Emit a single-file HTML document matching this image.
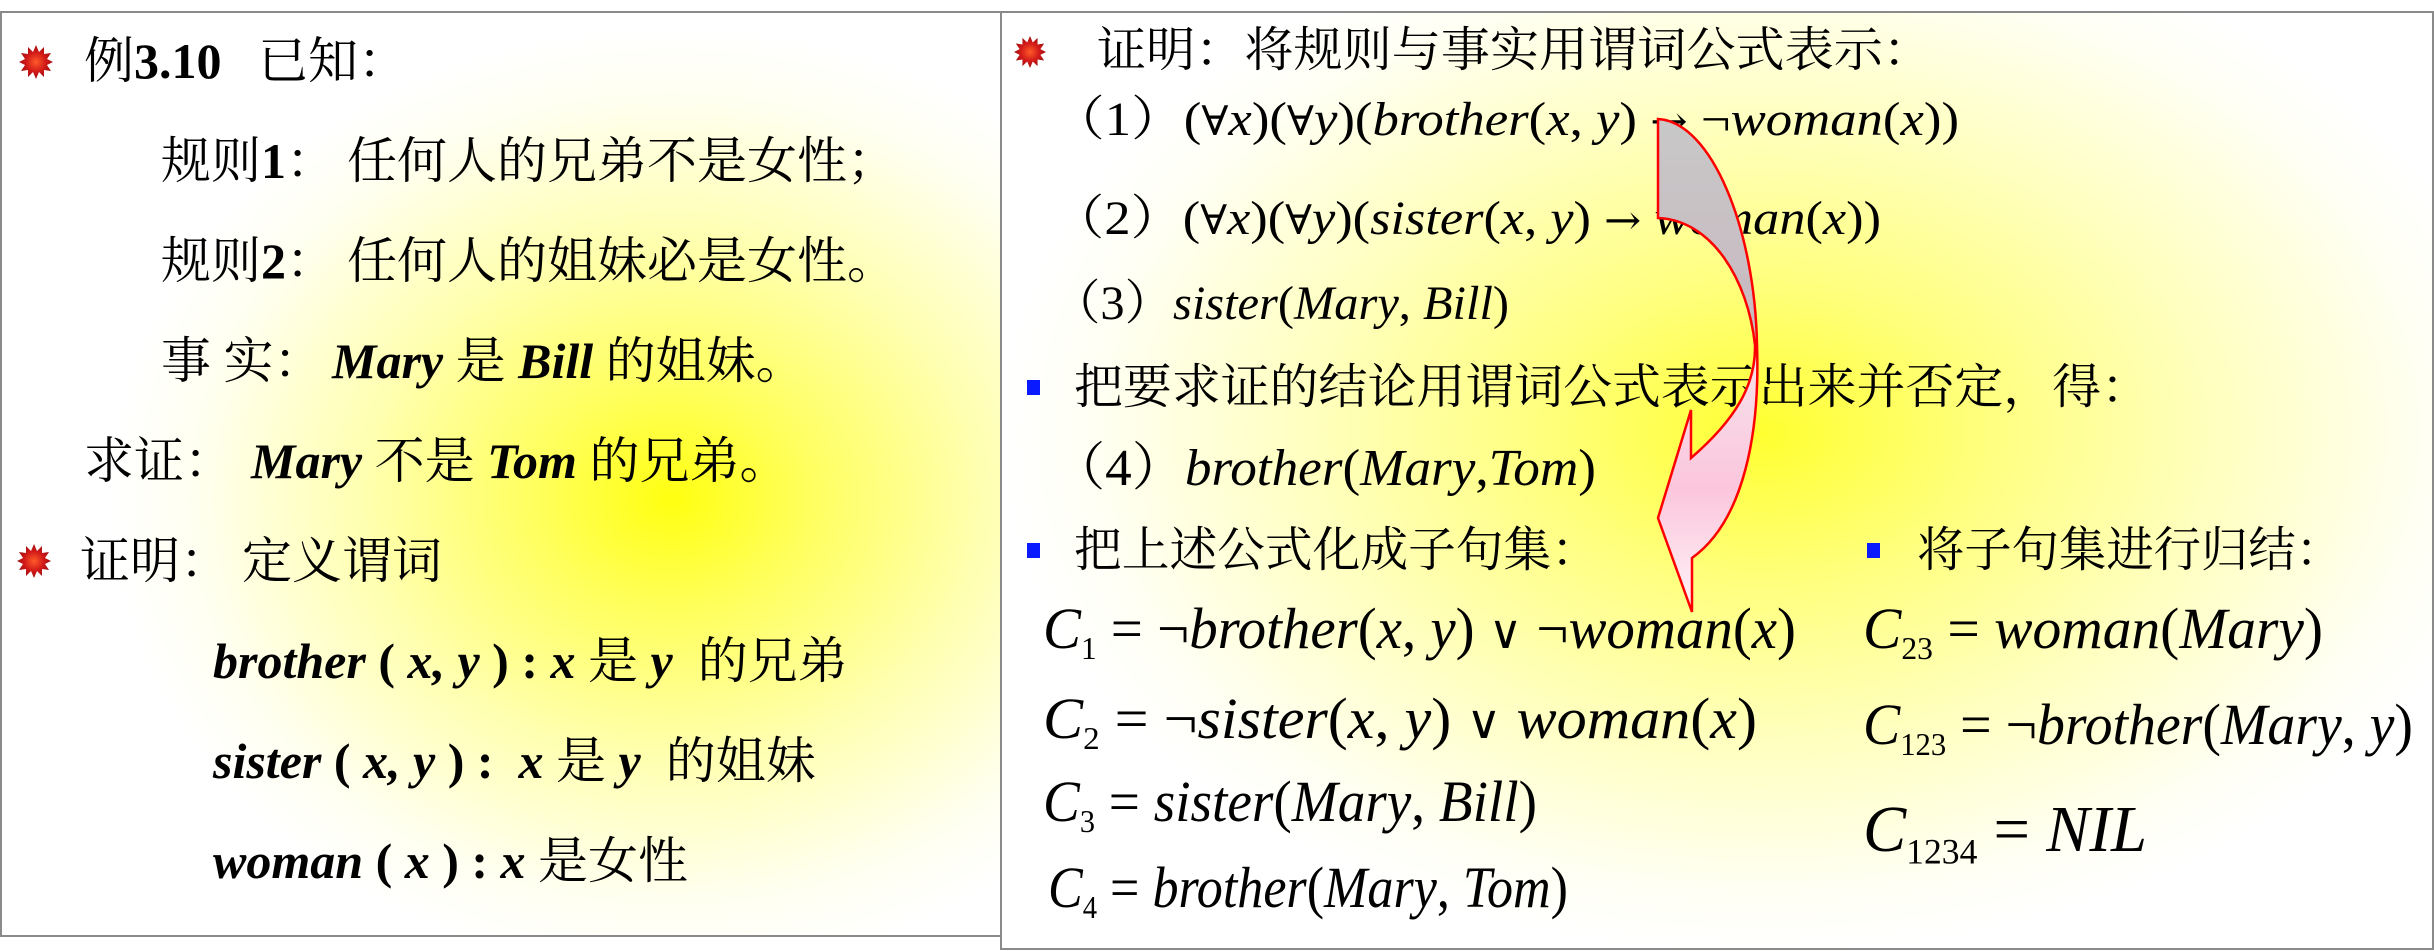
<!DOCTYPE html>
<html><head><meta charset="utf-8">
<style>
html,body{margin:0;padding:0;}
body{width:2434px;height:951px;position:relative;overflow:hidden;background:#fff;}
.p{position:absolute;box-sizing:border-box;border:2px solid #8a8a8a;}
#pl{left:0;top:11px;width:1002px;height:926px;background:radial-gradient(ellipse 560px 470px at 670px 486px,#ffff10 0%,#ffff60 25%,#ffffb0 55%,#fffff0 85%,#fff 100%);}
#pr{left:1000px;top:11px;width:1434px;height:939px;background:radial-gradient(ellipse 760px 520px at 760px 420px,#ffff30 0%,#ffff80 30%,#ffffc0 60%,#fffff4 88%,#fff 100%);}
.t{position:absolute;white-space:nowrap;color:#000;transform-origin:0 50%;}
.L{font-family:"Liberation Serif","Noto Serif CJK SC",serif;font-size:50px;line-height:50px;}
.b{font-weight:bold;}
.bi{font-weight:bold;font-style:italic;}
.R{font-family:"Liberation Serif","Noto Serif CJK SC",serif;font-size:48px;line-height:48px;}
.i{font-style:italic;}
.s{font-family:"DejaVu Serif",serif;font-style:normal;font-size:0.85em;}
sub{font-style:normal;font-size:0.55em;vertical-align:-0.35em;line-height:0;}
.sq{position:absolute;width:13px;height:15px;background:#0a1aff;}
.star{position:absolute;}
</style></head><body>
<div class="p" id="pl"></div>
<div class="p" id="pr"></div>

<svg width="0" height="0" style="position:absolute">
<defs>
<radialGradient id="sg"><stop offset="0" stop-color="#ff5a2a"/><stop offset="0.6" stop-color="#d01818"/><stop offset="1" stop-color="#a01010"/></radialGradient>
<linearGradient id="ag" x1="0" y1="0" x2="0" y2="1">
<stop offset="0" stop-color="#c8c8c8"/><stop offset="0.45" stop-color="#c8b8c0"/><stop offset="0.5" stop-color="#f7e0ea"/><stop offset="0.75" stop-color="#fbc6dc"/><stop offset="1" stop-color="#fff4f8"/></linearGradient>
</defs></svg>

<svg class="star" style="left:18px;top:44px" width="36" height="36" viewBox="-18 -18 36 36"><polygon fill="url(#sg)" points="0,-17 3,-10 8,-15 8,-8 15,-9 11,-3 17,0 11,3 15,9 8,8 8,15 3,10 0,17 -3,10 -8,15 -8,8 -15,9 -11,3 -17,0 -11,-3 -15,-9 -8,-8 -8,-15 -3,-10"/></svg>
<svg class="star" style="left:16px;top:543px" width="36" height="36" viewBox="-18 -18 36 36"><polygon fill="url(#sg)" points="0,-17 3,-10 8,-15 8,-8 15,-9 11,-3 17,0 11,3 15,9 8,8 8,15 3,10 0,17 -3,10 -8,15 -8,8 -15,9 -11,3 -17,0 -11,-3 -15,-9 -8,-8 -8,-15 -3,-10"/></svg>
<svg class="star" style="left:1013px;top:35px" width="34" height="34" viewBox="-18 -18 36 36"><polygon fill="url(#sg)" points="0,-17 3,-10 8,-15 8,-8 15,-9 11,-3 17,0 11,3 15,9 8,8 8,15 3,10 0,17 -3,10 -8,15 -8,8 -15,9 -11,3 -17,0 -11,-3 -15,-9 -8,-8 -8,-15 -3,-10"/></svg>

<div class="t L" style="left:84px;top:36px">例<span class="b">3.10</span></div>
<div class="t L" style="left:258px;top:36px">已知：</div>
<div class="t L" style="left:161px;top:136px">规则<span class="b">1</span>：</div>
<div class="t L" style="left:347px;top:136px">任何人的兄弟不是女性；</div>
<div class="t L" style="left:161px;top:236px">规则<span class="b">2</span>：</div>
<div class="t L" style="left:347px;top:236px">任何人的姐妹必是女性。</div>
<div class="t L" style="left:161px;top:336px">事 实：</div>
<div class="t L" style="left:332px;top:336px"><span class="bi">Mary</span> 是 <span class="bi">Bill</span> 的姐妹。</div>
<div class="t L" style="left:84px;top:436px">求证：</div>
<div class="t L" style="left:251px;top:436px"><span class="bi">Mary</span> 不是 <span class="bi">Tom</span> 的兄弟。</div>
<div class="t L" style="left:80px;top:536px">证明：</div>
<div class="t L" style="left:242px;top:536px">定义谓词</div>
<div class="t L" style="left:213px;top:636px"><span class="bi">brother</span> <span class="b">(</span> <span class="bi">x, y</span> <span class="b">)</span> <span class="b">:</span> <span class="bi">x</span> 是 <span class="bi">y</span>&nbsp; 的兄弟</div>
<div class="t L" style="left:213px;top:736px"><span class="bi">sister</span> <span class="b">(</span> <span class="bi">x, y</span> <span class="b">)</span> <span class="b">:</span>&nbsp; <span class="bi">x</span> 是 <span class="bi">y</span>&nbsp; 的姐妹</div>
<div class="t L" style="left:213px;top:836px"><span class="bi">woman</span> <span class="b">(</span> <span class="bi">x</span> <span class="b">)</span> <span class="b">:</span> <span class="bi">x</span> 是女性</div>

<div class="t R" id="r1" style="left:1097px;top:27px">证明：将规则与事实用谓词公式表示：</div>
<div class="t R" id="m1" style="left:1052px;top:96px">（1）(<span class="s">∀</span><span class="i">x</span>)(<span class="s">∀</span><span class="i">y</span>)(<span class="i">brother</span>(<span class="i">x</span>, <span class="i">y</span>) <span class="s">→</span> ¬<span class="i">woman</span>(<span class="i">x</span>))</div>
<div class="t R" id="m2" style="left:1052px;top:195px">（2）(<span class="s">∀</span><span class="i">x</span>)(<span class="s">∀</span><span class="i">y</span>)(<span class="i">sister</span>(<span class="i">x</span>, <span class="i">y</span>) <span class="s">→</span> <span class="i">woman</span>(<span class="i">x</span>))</div>
<div class="t R" id="m3" style="left:1052px;top:280px">（3）<span class="i">sister</span>(<span class="i">Mary</span>, <span class="i">Bill</span>)</div>
<div class="sq" style="left:1027px;top:380px"></div>
<div class="t R" id="r2" style="left:1074px;top:364px">把要求证的结论用谓词公式表示出来并否定，得：</div>
<div class="t R" id="m4" style="left:1052px;top:445px;font-size:52px">（4）<span class="i">brother</span>(<span class="i">Mary</span>,<span class="i">Tom</span>)</div>
<div class="sq" style="left:1027px;top:543px"></div>
<div class="t R" id="r3" style="left:1074px;top:527px">把上述公式化成子句集：</div>
<div class="sq" style="left:1867px;top:543px"></div>
<div class="t R" id="r4" style="left:1917px;top:527px">将子句集进行归结：</div>

<div class="t R" id="c1" style="left:1043px;top:600px;font-size:58px;line-height:58px"><span class="i">C</span><sub>1</sub> = ¬<span class="i">brother</span>(<span class="i">x</span>, <span class="i">y</span>) <span class="s" style="font-size:0.8em">∨</span> ¬<span class="i">woman</span>(<span class="i">x</span>)</div>
<div class="t R" id="c2" style="left:1043px;top:690px;font-size:58px;line-height:58px"><span class="i">C</span><sub>2</sub> = ¬<span class="i">sister</span>(<span class="i">x</span>, <span class="i">y</span>) <span class="s" style="font-size:0.8em">∨</span> <span class="i">woman</span>(<span class="i">x</span>)</div>
<div class="t R" id="c3" style="left:1043px;top:773px;font-size:58px;line-height:58px"><span class="i">C</span><sub>3</sub> = <span class="i">sister</span>(<span class="i">Mary</span>, <span class="i">Bill</span>)</div>
<div class="t R" id="c4" style="left:1048px;top:859px;font-size:58px;line-height:58px"><span class="i">C</span><sub>4</sub> = <span class="i">brother</span>(<span class="i">Mary</span>, <span class="i">Tom</span>)</div>
<div class="t R" id="c23" style="left:1863px;top:600px;font-size:58px;line-height:58px"><span class="i">C</span><sub>23</sub> = <span class="i">woman</span>(<span class="i">Mary</span>)</div>
<div class="t R" id="c123" style="left:1863px;top:696px;font-size:58px;line-height:58px"><span class="i">C</span><sub>123</sub> = ¬<span class="i">brother</span>(<span class="i">Mary</span>, <span class="i">y</span>)</div>
<div class="t R" id="c1234" style="left:1863px;top:797px;font-size:66px;line-height:66px"><span class="i">C</span><sub>1234</sub> = <span class="i">NIL</span></div>

<svg style="position:absolute;left:0;top:0" width="2434" height="951">
<path d="M1658,119 C1712,122 1755,230 1757,345 C1760,430 1745,520 1692,558 L1692,612 L1658,518 L1691,410 L1691,458 C1735,420 1756,385 1755,345 C1748,280 1712,220 1658,218 Z" fill="url(#ag)" stroke="#ff0000" stroke-width="2.5" stroke-linejoin="miter"/>
</svg>

<script>
var W={r1:[1097,1932],m1:[1052,1959],m2:[1052,1881],m3:[1052,1509],r2:[1074,2150],m4:[1052,1596],r3:[1074,1599],r4:[1917,2343],c1:[1043,1796],c2:[1043,1757],c3:[1043,1537],c4:[1048,1568],c23:[1863,2323],c123:[1863,2413],c1234:[1863,2147]};
for(var k in W){var e=document.getElementById(k);if(!e)continue;var w=e.getBoundingClientRect().width;var t=W[k][1]-W[k][0];if(w>0)e.style.transform='scaleX('+(t/w)+')';}
</script>
</body></html>
